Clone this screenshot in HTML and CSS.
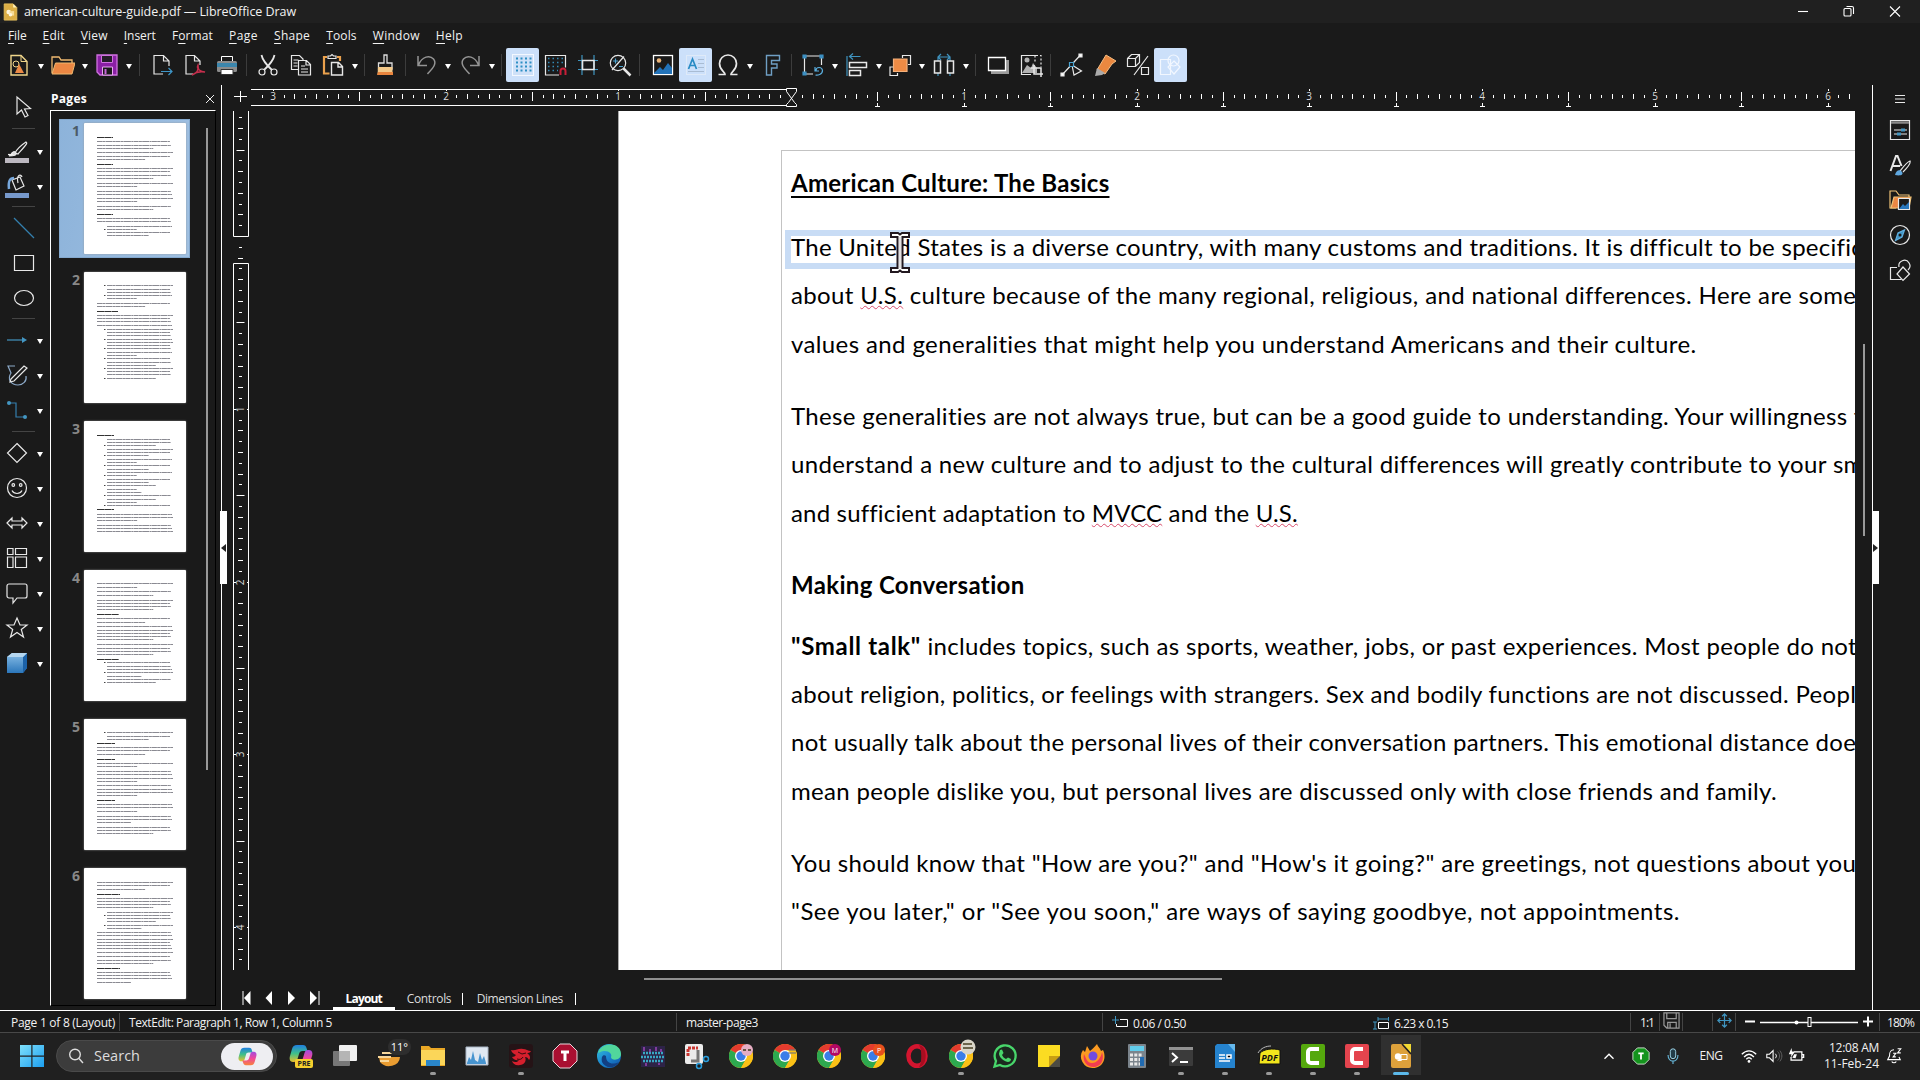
FILE: index.html
```html
<!DOCTYPE html>
<html lang="en">
<head>
<meta charset="utf-8">
<title>american-culture-guide.pdf — LibreOffice Draw</title>
<link rel="stylesheet" href="styles.css">
</head>
<body>
<div class="app">
<header class="titlebar">
  <svg class="appicon" viewBox="0 0 16 20"><path d="M1 1h10l4 4v14H1z" fill="#dcae45" stroke="#e9c15b"/><path d="M11 1l4 4h-4z" fill="#fff3c0"/><circle cx="6" cy="10" r="2.6" fill="#fff6dc"/><path d="M7 9h5v5H7z" fill="#f6dc97"/><circle cx="8" cy="13" r="2" fill="#fff6dc"/></svg>
  <span class="title"><span data-w="272">american-culture-guide.pdf — LibreOffice Draw</span></span>
  <svg class="winbtn" viewBox="0 0 46 22"><path d="M18 10.5h10"/></svg>
  <svg class="winbtn" viewBox="0 0 46 22"><rect x="18" y="7.5" width="7" height="7.5" rx="1"/><path d="M20.500 5.500h5.500a1.500 1.500 0 0 1 1.500 1.500v6"/></svg>
  <svg class="winbtn" viewBox="0 0 46 22"><path d="M18 5.500l10 10M28 5.500l-10 10"/></svg>
</header>
<nav class="menubar">
  <span data-w="18.5"><u>F</u>ile</span><span data-w="22"><u>E</u>dit</span><span data-w="27"><u>V</u>iew</span><span data-w="32"><u>I</u>nsert</span><span data-w="41">F<u>o</u>rmat</span><span data-w="29"><u>P</u>age</span><span data-w="36"><u>S</u>hape</span><span data-w="30.500"><u>T</u>ools</span><span data-w="47"><u>W</u>indow</span><span data-w="27"><u>H</u>elp</span>
</nav>
<div class="toolbar">
  <i class="b"><svg viewBox="0 0 24 24"><path d="M4 2.500h10l6 6v13.500H4z" fill="none" stroke="#efd58a" stroke-width="1.400"/><path d="M14 2.500v6h6" fill="none" stroke="#efd58a"/><circle cx="9" cy="11" r="3" fill="none" stroke="#efd58a"/><path d="M12 11l5 9H8z" fill="#ec8a45"/></svg></i><i class="c"></i>
  <i class="b"><svg viewBox="0 0 24 24"><path d="M1 20V4h7l2 3h11v3" fill="none" stroke="#efb970" stroke-width="1.300"/><path d="M4.500 10H24l-3 11H1z" fill="#ec8743" stroke="#efb970"/></svg></i><i class="c"></i>
  <i class="b"><svg viewBox="0 0 24 24"><path d="M2 2h20v20H5l-3-3z" fill="#8b1fa5" stroke="#cf72df" stroke-width="1.300"/><path d="M6.500 2.500h11v7h-11z" fill="#241c28" stroke="#cf72df"/><path d="M7.500 14h10v8h-10z" fill="#1a1a1a" stroke="#e9a8f2"/><path d="M9.500 16h2v5h-2z" fill="#c765d8"/></svg></i><i class="c"></i>
  <i class="s s3"></i>
  <i class="b"><svg viewBox="0 0 24 24" class="ln"><path d="M19 13V8l-5.500-5.500H4V21h9M13.500 2.500V8H19"/><path d="M11 18.500h11M18.500 15l3.500 3.500-3.500 3.500" stroke="#3e96c8"/></svg></i>
  <i class="b"><svg viewBox="0 0 24 24" class="ln"><path d="M18 12V8l-5.500-5.500H4V21h7M12.500 2.500V8H18"/><path d="M10 22c5-2 7-6 6-10-2 4 3 7 7 7-5-1-9 0-13 3z" stroke="#c52e4c" stroke-width="1.500"/></svg></i>
  <i class="b"><svg viewBox="0 0 24 24"><path d="M6.500 3.500h11V10h-11z" fill="#1a1a1a" stroke="#fff"/><rect x="2" y="8" width="20" height="11" rx="1.500" fill="#8c8c8c"/><rect x="2" y="10" width="20" height="4" fill="#3c86ac"/><path d="M6 16.500h12v5H6z" fill="#fff" stroke="#333"/></svg></i>
  <i class="s"></i>
  <i class="b"><svg viewBox="0 0 24 24" class="ln"><path d="M5.500 2c1 5 4 9 10.500 15M18.500 2c-1 5-4 9-10.500 15" stroke-width="1.800"/><circle cx="6" cy="19" r="3"/><circle cx="18" cy="19" r="3"/></svg></i>
  <i class="b"><svg viewBox="0 0 24 24" class="ln"><path d="M9 16.500H2.500v-14h8L14 6v1M4.500 7h5M4.500 10h4M4.500 13h4M9.500 7.500h8l4 4v10.500h-12zM17 8v4h4M12 13h4M12 16h7M12 19h7"/></svg></i>
  <i class="b"><svg viewBox="0 0 24 24" class="ln"><path d="M8.500 20.500H3V4h3M16 4h3v4" stroke="#eaa14d" stroke-width="2.200"/><path d="M7 5.500V3h2.500L11 1.500 12.500 3H15v2.500z"/><path d="M10.500 9.500h7l4 4v8.500h-11zM17 10v4h4" stroke-width="1.400"/></svg></i><i class="c"></i>
  <i class="s"></i>
  <i class="b"><svg viewBox="0 0 24 24"><path d="M11 2h3v8h5v6H5.500v-6H11z" fill="#1a1a1a" stroke="#ddd" stroke-width="1.300"/><path d="M5 14h14.500v7.500h-15z" fill="#f3c98a"/><path d="M5 19h15v3H4z" fill="#e9853e"/></svg></i>
  <i class="s"></i>
  <i class="b"><svg viewBox="0 0 24 24" class="ln dim"><path d="M3 3v9.500h9M3.500 12C7 3 15 2 18.500 6c4 5-1.500 10-6 15"/></svg></i><i class="c"></i>
  <i class="b"><svg viewBox="0 0 24 24" class="ln dim"><path d="M21 3v9.500h-9M20.500 12C17 3 9 2 5.500 6c-4 5 1.500 10 6 15"/></svg></i><i class="c"></i>
  <i class="s"></i>
  <i class="b on"><svg viewBox="0 0 24 24"><rect x="1.500" y="1.500" width="21" height="21" fill="#cfe1f8" stroke="#f3f8ff"/><path d="M5 5.500h16M5 9.500h16M5 13.500h16M5 17.500h16" stroke="#2e8fc4" stroke-width="2" stroke-dasharray="2 2.500"/></svg></i>
  <i class="b"><svg viewBox="0 0 24 24" class="ln"><path d="M16 22H2.500V2.500h20v12"/><path d="M5 5.500h15M5 9.500h15M5 13.500h11M5 17.500h10" stroke="#3389b5" stroke-width="1.700" stroke-dasharray="1.500 3"/><path d="M17.500 22v-4a2.500 2.500 0 0 1 5 0v4" stroke="#c81f38" stroke-width="2"/></svg></i>
  <i class="b"><svg viewBox="0 0 24 24" class="ln"><path d="M6 2v20M18 2v20M2 7.500h20M2 16.500h20" stroke="#3f95c0"/><path d="M6.500 7.500h11.500v9H6.500z" stroke-width="1.600"/></svg></i>
  <i class="b"><svg viewBox="0 0 24 24" class="ln"><circle cx="10" cy="10" r="7.700"/><path d="M4 17L16 3.500"/><path d="M5 8h5M7.500 5.500v5M11 13.500h4" stroke="#4ba3d0"/><path d="M15.500 15.500l7 7" stroke-width="2.500"/></svg></i>
  <i class="s s2"></i>
  <i class="b"><svg viewBox="0 0 24 24"><rect x="2.500" y="2.500" width="19" height="19" fill="#1a1a1a" stroke="#fff" stroke-width="1.300"/><path d="M3 20l6-6 3 3 5-7 4 5v6H3z" fill="#2373b9"/><circle cx="8" cy="7.500" r="2.300" fill="#ecb478"/></svg></i>
  <i class="b on"><svg viewBox="0 0 24 24"><rect x="2.500" y="2.500" width="19" height="19" fill="none" stroke="#dfeaf8"/><path d="M4.500 16L8.500 6l4 10M6 12.500h5" fill="none" stroke="#298bc4" stroke-width="1.700"/><path d="M14 6.500h6M14 10.500h6M14 14.500h6M4 18.500h16" stroke="#a9bcd3"/></svg></i>
  <i class="b"><svg viewBox="0 0 24 24" class="ln"><path d="M2.500 21.500H9c0-3-5.500-4-5.500-11a8.500 8.500 0 0 1 17 0c0 7-5.500 8-5.500 11h6.500" stroke-width="1.700"/></svg></i><i class="c"></i>
  <i class="b"><svg viewBox="0 0 24 24" class="ln"><path d="M6.500 2.500h13v5h-8v3.500h5.500v4h-5.500v7h-5z" stroke="#6f9fc4" stroke-width="1.400"/></svg></i>
  <i class="s"></i>
  <i class="b"><svg viewBox="0 0 24 24" class="ln"><path d="M12 21H3.500V3h17v9"/><path d="M2 2h3v3H2zM19 2h3v3h-3zM2 19h3v3H2z" fill="#3c8fc2" stroke="#3c8fc2"/><path d="M15 17.500c0-4 6-4 6.500 0 0 4-5 5-7 4.500M14 14v4h4" stroke="#5aaede" /></svg></i><i class="c"></i>
  <i class="b"><svg viewBox="0 0 24 24" class="ln"><path d="M2 3v20M4.500 3.500h11M8 .5l-3.500 3 3.500 3" stroke="#3f93bf"/><path d="M4.500 9.500h17v5h-17zM4.500 17.500h11v5h-11z" stroke-width="1.500"/></svg></i><i class="c"></i>
  <i class="b"><svg viewBox="0 0 24 24" class="ln"><path d="M14.500 5V2.500h8v9H20M9.500 20v2.500H2V14h3"/><path d="M5.500 6h13.500v12.500H5.500z" fill="#ee8b45" stroke="#f3b07b"/></svg></i><i class="c"></i>
  <i class="b"><svg viewBox="0 0 24 24" class="ln"><path d="M6 4h12M9 1L6 4l3 3M15 1l3 3-3 3M6 4v19M18 4v19" stroke="#3f93bf"/><path d="M2.500 8h6v12h-6zM15.500 8h6v12h-6z" fill="#1a1a1a" stroke-width="1.500"/></svg></i><i class="c"></i>
  <i class="s s2"></i>
  <i class="b"><svg viewBox="0 0 24 24"><path d="M5 7h18v14H5z" fill="#9b9b9b"/><path d="M2.500 4.500h17v13h-17z" fill="#1a1a1a" stroke="#fff" stroke-width="1.300"/></svg></i>
  <i class="b"><svg viewBox="0 0 24 24" class="ln"><path d="M17 2.500H2.500v19H12"/><path d="M17 2.500h5V14M16 2.500v8" stroke-dasharray="2 2"/><path d="M3 20l5-8 4 3 2-5 4 5v5H3z" fill="#b2b2b2" stroke="none"/><circle cx="8" cy="7" r="2.500" fill="#b2b2b2" stroke="none"/><path d="M15 12v9h9M11.500 15H22v9" stroke-width="1.500"/></svg></i>
  <i class="s"></i>
  <i class="b"><svg viewBox="0 0 24 24" class="ln"><path d="M2 22L20.500 2M12 12l2 10 7.500-4z"/><path d="M19 1h3v3h-3zM1 20h3v3H1z" fill="#fff"/><path d="M9.500 9.500h4v4h-4z" fill="#1a1a1a" stroke="#4ba3d0"/></svg></i>
  <i class="b w"><svg viewBox="0 0 24 24"><path d="M13 2l10 6-4 3-7 10-8-4 6-10z" fill="#ea8840" stroke="#f4bd82"/><path d="M4 15l8 5-3 2-7 1z" fill="#aaa"/></svg></i>
  <i class="b w"><svg viewBox="0 0 24 24" class="ln"><path d="M1.500 5.500l4-4h8v8l-4 4h-8zM1.500 5.500h8l4-4M9.500 5.500v8M22 3L8 22M15.500 14.500h7v7h-7z"/></svg></i>
  <i class="b on"><svg viewBox="0 0 24 24" class="ln pale"><path d="M2.500 6.500h10v15h-10z"/><circle cx="15.500" cy="7.500" r="5.500"/><path d="M16 8l6 6-6 7-6-7z"/></svg></i>
</div>
<main class="main">
  <aside class="tools">
    <div class="t wide"><svg viewBox="0 0 24 24" class="ln"><path d="M5 2v17l4.500-4 3.500 7 3-1.500-3.500-6.500 6-.5z"/></svg></div>
    <hr class="h6">
    <div class="t"><svg viewBox="0 0 24 24" class="ln"><path d="M10 14c2-4 8-9 11-11 2 1 0 3-8 12z"/><path d="M6 16c1-4 4-4 5-2s-2 3-7 3z" fill="#ddd"/><path d="M3 15.500h5" stroke="#eee"/><path d="M0 19h24v5.500H0z" fill="#bcb8c0" stroke="none"/></svg><b></b></div>
    <div class="t"><svg viewBox="0 0 24 24" class="ln"><path d="M7 6l8-3 4 9-8 4zM13 9c-2-9 3-9 4-6"/><path d="M4 15C3 7 5 4 9 4" stroke="#77a8dc" stroke-width="2.500"/><path d="M0 19h24v5.500H0z" fill="#7799cc" stroke="none"/></svg><b></b></div>
    <hr class="h7">
    <div class="t wide"><svg viewBox="0 0 24 24" class="ln"><path d="M2 2l20 20" stroke="#347fae"/></svg></div>
    <div class="t wide"><svg viewBox="0 0 24 24" class="ln"><path d="M2.500 4.500h19v15h-19z"/></svg></div>
    <div class="t wide"><svg viewBox="0 0 24 24" class="ln"><ellipse cx="12" cy="12" rx="9.500" ry="7.500"/></svg></div>
    <hr class="h7">
    <div class="t"><svg viewBox="0 0 24 24" class="ln"><path d="M2 12h17" stroke="#4396c2"/><path d="M17 9l5 3-5 3z" fill="#4396c2" stroke="none"/></svg><b></b></div>
    <div class="t"><svg viewBox="0 0 24 24" class="ln"><path d="M10 3H3l3 7c-4 6 0 12 7 12 5 0 9-4 8-9" stroke="#8ca9c8"/><path d="M6 16L19 3l3 2L9 18l-4 1z" fill="#1a1a1a"/></svg><b></b></div>
    <div class="t"><svg viewBox="0 0 24 24" class="ln"><path d="M4 5h7v14h9" stroke="#347fae"/><circle cx="4" cy="5" r="2" fill="#4396c2" stroke="none"/><circle cx="20" cy="19" r="2" fill="#4396c2" stroke="none"/></svg><b></b></div>
    <hr class="h8">
    <div class="t"><svg viewBox="0 0 24 24" class="ln"><path d="M12 2.500l9.500 9.500-9.500 9.500L2.500 12z"/></svg><b></b></div>
    <div class="t"><svg viewBox="0 0 24 24" class="ln"><circle cx="12" cy="12" r="9.500"/><circle cx="8.300" cy="9" r="1.300"/><circle cx="15.700" cy="9" r="1.300"/><path d="M7 14.500c2 4 8 4 10 0"/></svg><b></b></div>
    <div class="t"><svg viewBox="0 0 24 24" class="ln"><path d="M2 12l5-5v3h10V7l5 5-5 5v-3H7v3z"/></svg><b></b></div>
    <div class="t"><svg viewBox="0 0 24 24" class="ln"><path d="M2.500 2.500h5.500v6H2.500zM10.500 2.500h11v6h-11zM2.500 11h5.500v10.500H2.500zM10.500 11h11v10.500h-11z"/></svg><b></b></div>
    <div class="t"><svg viewBox="0 0 24 24" class="ln"><path d="M4 3h16a2 2 0 0 1 2 2v10a2 2 0 0 1-2 2h-8l-4 5v-5H4a2 2 0 0 1-2-2V5a2 2 0 0 1 2-2z"/></svg><b></b></div>
    <div class="t"><svg viewBox="0 0 24 24" class="ln"><path d="M12 2l3 7h7l-5.700 4.500L18.500 21 12 16.500 5.500 21l2.200-7.500L2 9h7z"/></svg><b></b></div>
    <div class="t"><svg viewBox="0 0 24 24"><defs><linearGradient id="cu" x2="0" y2="1"><stop stop-color="#8abfe8"/><stop offset="1" stop-color="#2b76ba"/></linearGradient></defs><path d="M2 6l5-4h15v15l-4 5H2z" fill="url(#cu)"/><path d="M18 6l4-4v15l-4 5z" fill="#1c62a8"/><path d="M2 6l5-4h15l-4 4z" fill="#b5d7f0"/></svg><b></b></div>
  </aside>
  <section class="pages">
    <div class="phead"><span data-w="36">Pages</span><svg viewBox="0 0 10 10"><path d="M1 1l8 8M9 1L1 9" stroke="#eee" fill="none"/></svg></div>
    <div class="plist"><div class="thumbs"></div><div class="pscroll"></div></div>
  </section>
  <section class="work">
    <div class="lefthandle"></div>
    <svg class="hruler"></svg>
    <div class="row">
      <svg class="vruler"></svg>
      <div class="canvas">
        <article class="sheet">
          <div class="frame">
            <div class="doc">
              <h1><span data-w="318.500"><u>American Culture: The Basics</u></span></h1>
              <p class="g1"><span data-w="1059">The United States is a diverse country, with many customs and traditions. It is difficult to be specifi</span>c</p>
              <p><span data-w="1065">about <em>U.S.</em> culture because of the many regional, religious, and national differences. Here are some</span></p>
              <p><span data-w="906">values and generalities that might help you understand Americans and their culture.</span></p>
              <p class="g2"><span data-w="1057">These generalities are not always true, but can be a good guide to understanding. Your willingness</span> to</p>
              <p><span data-w="1035">understand a new culture and to adjust to the cultural differences will greatly contribute to your</span> smooth</p>
              <p><span data-w="506">and sufficient adaptation to <em>MVCC</em> and the <em>U.S.</em></span></p>
              <h2 class="g2"><span data-w="234">Making Conversation</span></h2>
              <p class="g3"><span data-w="130"><strong>"Small talk"</strong></span><span data-w="936"> includes topics, such as sports, weather, jobs, or past experiences. Most people do not</span></p>
              <p><span data-w="1066">about religion, politics, or feelings with strangers. Sex and bodily functions are not discussed. Peopl</span>e do</p>
              <p><span data-w="1066">not usually talk about the personal lives of their conversation partners. This emotional distance doe</span>s not</p>
              <p><span data-w="986">mean people dislike you, but personal lives are discussed only with close friends and family.</span></p>
              <p class="g2"><span data-w="1066">You should know that "How are you?" and "How's it going?" are greetings, not questions about you</span>r</p>
              <p><span data-w="889">"See you later," or "See you soon," are ways of saying goodbye, not appointments.</span></p>
            </div>
          </div>
          <div class="editbox"></div>
          <svg class="ibeam" viewBox="0 0 20 41"><path d="M1 1h7l2 1.500L12 1h7v4h-6.500v31H19v4h-7l-2-1.500L8 40H1v-4h6.500V5H1z" fill="#fff" stroke="#221820" stroke-width="2"/><path d="M10 5v31" stroke="#c9c3c8"/></svg>
        </article>
      </div>
      <div class="vscroll"><div></div></div>
    </div>
    <div class="hscroll"><div></div></div>
    <div class="tabs">
      <svg viewBox="0 0 14 14"><path d="M3 0v14" stroke="#fff"/><path d="M10.500 0v14L4 7z" fill="#fff"/></svg>
      <svg viewBox="0 0 14 14"><path d="M10 0v14L3.500 7z" fill="#fff"/></svg>
      <svg viewBox="0 0 14 14"><path d="M4 0v14l7-7z" fill="#fff"/></svg>
      <svg viewBox="0 0 14 14"><path d="M3 0v14l7-7z" fill="#fff"/><path d="M12 0v14" stroke="#fff"/></svg>
      <span class="tab active"><span data-w="36.500">Layout</span></span>
      <span class="tab t2"><span data-w="44.500">Controls</span></span>
      <span class="tab t3"><span data-w="86">Dimension Lines</span></span>
    </div>
  </section>
  <aside class="side">
    <div class="righthandle"></div>
    <svg viewBox="0 0 24 24" class="ln m"><path d="M7 8.500h10M7 12h10M7 15.500h10"/></svg>
    <svg viewBox="0 0 24 24" class="ln"><path d="M2.500 2.500h19v19h-19z"/><path d="M3 4.500h18" stroke="#888" stroke-width="2.500"/><path d="M6 12h13M6 16h13"/><path d="M13 10.500h4v3h-4zM9 14.500h4v3H9z" fill="#4396c2" stroke="none"/></svg>
    <svg viewBox="0 0 24 24" class="ln"><path d="M2.500 18L8 3h1.500l4 10M5 13h7" stroke-width="2"/><path d="M12 18c4-5 7-9 10-10 1 2-4 8-7 11"/><path d="M7 22c1-5 5-6 7-3s-2 4-7 3z" fill="#5fa7df" stroke="none"/></svg>
    <svg viewBox="0 0 24 24" class="ln"><path d="M8 20H2V3h6l3 4h10v2" stroke="#efc276"/><path d="M6 9h17l-2 11H3z" fill="#ec8743" stroke="#efc276"/><path d="M10.500 10.500h11v11h-11z" fill="#1a1a1a"/><path d="M11 21l4-5 2 2 4-4v7z" fill="#2877bd" stroke="none"/></svg>
    <svg viewBox="0 0 24 24" class="ln"><circle cx="12" cy="12" r="9.500"/><path d="M16.500 7l-2.500 7-6.500 3.500L10 10z" fill="#3f94c5" stroke="#62b0df"/><circle cx="12" cy="12" r="1.500" fill="#1a1a1a" stroke="none"/></svg>
    <svg viewBox="0 0 24 24" class="ln"><path d="M9 9.500H2.500v12h11"/><path d="M11 9a5.500 5.500 0 1 1 9 3"/><path d="M15 9l6.500 7-6.500 6.500L9 16z"/></svg>
  </aside>
</main>
<footer class="status">
  <span class="p1"><span data-w="104">Page 1 of 8 (Layout)</span></span><span><span data-w="203">TextEdit: Paragraph 1, Row 1, Column 5</span></span><span><span data-w="72">master-page3</span></span>
  <span class="coord"><svg viewBox="0 0 16 14"><path d="M8 3.500h7.500v7h-11V8" stroke="#fff" fill="none"/><path d="M0 4h7M3.500 0v8" stroke="#3f95c0"/></svg><span data-w="53">0.06 / 0.50</span></span>
  <span class="coord nb"><svg viewBox="0 0 16 14"><path d="M5.500 6.500h10v6h-10z" stroke="#fff" fill="none"/><path d="M5 3h11M5 1v4M15.500 1v4M2 6v7M0 6h4M0 13h4" stroke="#3f95c0"/></svg><span data-w="54">6.23 x 0.15</span></span>
  <span><span data-w="14">1:1</span></span>
  <span class="ic"><svg viewBox="0 0 18 18"><path d="M1 1h16v16H4l-3-3zM4 1v6h10V1M5 17v-6h9v6M7.500 12v5" fill="none" stroke="#999" stroke-width="1.300"/></svg></span><span></span>
  <span class="ic"><svg viewBox="0 0 18 18"><path d="M9 2v14M2 9h14M6.500 4.500L9 2l2.500 2.500M6.500 13.500L9 16l2.500-2.500M4.500 6.500L2 9l2.500 2.500M13.500 6.500L16 9l-2.500 2.500" fill="none" stroke="#3f95c0" stroke-width="1.300"/></svg></span>
  <span class="zoom"><svg viewBox="0 0 143 20"><path d="M9 9.500h10M127 9.500h10M132 4.500v10" stroke="#fff" stroke-width="2"/><path d="M24 10.500h98" stroke="#fff" stroke-width="1.400"/><circle cx="60.500" cy="10.500" r="2" fill="#fff"/><rect x="72" y="5.500" width="3" height="9" fill="#1a1a1a" stroke="#fff"/></svg></span>
  <span><span data-w="27">180%</span></span>
</footer>
<footer class="taskbar">
  <svg class="start" viewBox="0 0 24 24"><defs><linearGradient id="wn" x2="1" y2="1"><stop stop-color="#7fe0fb"/><stop offset="1" stop-color="#1c9ff0"/></linearGradient><linearGradient id="cp" x2="0" y2="1"><stop stop-color="#1f7fe0"/><stop offset=".5" stop-color="#3fc08a"/><stop offset="1" stop-color="#e8c22c"/></linearGradient><linearGradient id="cq" x2="0" y2="1"><stop stop-color="#a24be0"/><stop offset=".5" stop-color="#f0489a"/><stop offset="1" stop-color="#f7833c"/></linearGradient><linearGradient id="ed" x2="1" y2="1"><stop stop-color="#35c5d8"/><stop offset=".5" stop-color="#1b86d2"/><stop offset="1" stop-color="#0e53a5"/></linearGradient>
  <symbol id="copilot" viewBox="0 0 24 24"><path d="M8 1h6c2 0 3 1 3.500 3l1 3h-5c-2 0-3 1-3.500 3l-1.500 5c-.5 2-1.500 3-3.500 3H4c-3 0-4-3-3-6l2-7c1-3 2-4 5-4z" fill="url(#cp)"/><path d="M16 23h-6c-2 0-3-1-3.500-3l-1-3h5c2 0 3-1 3.500-3L15.500 9c.5-2 1.500-3 3.500-3h1c3 0 4 3 3 6l-2 7c-1 3-2 4-5 4z" fill="url(#cq)"/></symbol>
  <symbol id="chrome" viewBox="0 0 24 24"><circle cx="12" cy="12" r="12" fill="#fbc116"/><path d="M12 12L1.600 6A12 12 0 0 1 22.400 6z" fill="#e33b2e"/><path d="M12 12L1.600 6A12 12 0 0 0 12 24l5-9z" fill="#2da94f"/><path d="M12 6h10.400A12 12 0 0 1 12 24l5.200-9z" fill="#fbc116"/><circle cx="12" cy="12" r="6" fill="#fff"/><circle cx="12" cy="12" r="4.700" fill="#3a7de8"/></symbol></defs>
  <path d="M0 1h11.300v10.500H0zM12.500 1H24v10.500H12.500zM0 12.700h11.300V23H0zM12.500 12.700H24V23H12.500z" fill="url(#wn)"/></svg>
  <div class="search"><svg viewBox="0 0 16 16"><circle cx="7" cy="6.500" r="5.300" fill="none" stroke="#ddd" stroke-width="1.400"/><path d="M11 10.500l4 4.500" stroke="#ddd" stroke-width="1.400"/></svg><span data-w="46">Search</span><div class="pill"><svg viewBox="0 0 24 24"><use href="#copilot"/></svg></div></div>
  <div class="apps">
    <i><svg viewBox="0 0 24 24"><use href="#copilot"/><rect x="6" y="15" width="18" height="9" rx="2" fill="#f6cf2d"/><text x="15" y="22.300" class="pre">PRE</text></svg></i>
    <i><svg viewBox="0 0 24 24"><rect x="6" y="1" width="18" height="16" rx="1" fill="#f1f1f1"/><rect x="0" y="7" width="17" height="15" rx="1" fill="#777"/><rect x="6" y="7" width="11" height="10" fill="#b5b5b5"/></svg></i>
    <i><svg viewBox="0 0 24 24"><path d="M2 13h21a11 9.500 0 0 1-20 5z" fill="#e99c31"/><path d="M5 9h11M1 13h13M3 17h9" stroke="#f8d79a" stroke-width="2"/></svg><small>11°</small></i>
    <i class="run"><svg viewBox="0 0 24 24"><path d="M0 2h8l2 2h14v18H0z" fill="#eaa825"/><path d="M0 6h24v15H0z" fill="#fbd659"/><path d="M5 16h14v6H5z" fill="#2a86c9"/></svg></i>
    <i><svg viewBox="0 0 24 24"><path d="M1 3h22v18H1z" fill="#dfe8f2" stroke="#a9b5c4"/><path d="M2 19l2-6 2 3 2-9 2 9 3 2 2-9 2 7 2-4 2 7v1H2z" fill="#4794cf"/></svg></i>
    <i class="run"><svg viewBox="0 0 24 24"><rect width="24" height="24" rx="3" fill="#251316"/><path d="M2 6c5 1 7-2 12-1 3 0 5 2 8 2-1 2-3 2-4 2 3 2 4 5 2 7-1-2-2-3-4-3 2 4-1 8-5 8-4 1-7-1-8-4 3 2 6 1 7-1-3 1-6-1-7-3 2 0 3-1 4-2-2-1-4-2-5-5z" fill="#d51f2d"/><path d="M9 8l4 2 4-1M8 15c3 1 5 0 6-2" stroke="#39090d" fill="none"/></svg></i>
    <i><svg viewBox="0 0 24 24"><path d="M7 0h10l7 7v10l-7 7H7l-7-7V7z" fill="#a90f31" stroke="#ead8dc"/><path d="M8 8h8M12 8v9" stroke="#fff" stroke-width="3"/></svg></i>
    <i><svg viewBox="0 0 24 24"><circle cx="12" cy="12" r="12" fill="url(#ed)"/><path d="M1 9C5-3 24-2 24 10c0 7-10 7-10 3 2-4-5-9-13-4z" fill="#51d69c"/><path d="M9 12c0 8 7 9 13 6-5 8-14 6-17 0-1-5 1-8 4-6z" fill="#123f82"/></svg></i>
    <i><svg viewBox="0 0 24 24"><rect y="2" width="24" height="21" fill="#2d2347"/><path d="M2 9h20M0 13h24M2 17h20" stroke="#38a8c4" stroke-width="2.500" stroke-dasharray="2 1"/><path d="M3 3v4M9 5v3M15 3v4M20 5v3M5 19v3M18 19v2" stroke="#9b45b8" stroke-width="1.500"/></svg></i>
    <i><svg viewBox="0 0 24 24"><rect width="18" height="20" rx="2" fill="#ececec"/><path d="M3 12V4h10" fill="none" stroke="#c93530" stroke-width="3" stroke-dasharray="3 1"/><path d="M13 6v11H6" fill="none" stroke="#777" stroke-width="3"/><circle cx="21" cy="15" r="2.500" fill="none" stroke="#2a9ddb" stroke-width="1.500"/><circle cx="14" cy="22" r="2.500" fill="none" stroke="#2a9ddb" stroke-width="1.500"/></svg></i>
    <i><svg viewBox="0 0 24 24"><use href="#chrome"/><circle cx="18" cy="6" r="6" fill="#e5adc3"/><path d="M14 6h3M19 6h3" stroke="#654" stroke-width="2"/></svg></i>
    <i><svg viewBox="0 0 24 24"><use href="#chrome"/><path d="M16 6h7M15 9h8" stroke="#777" stroke-width="2" opacity=".6"/></svg></i>
    <i><svg viewBox="0 0 24 24"><use href="#chrome"/><circle cx="18" cy="6" r="6" fill="#b30764"/><text x="18" y="8.600" class="av">M</text></svg></i>
    <i><svg viewBox="0 0 24 24"><use href="#chrome"/><circle cx="18" cy="6" r="6" fill="#e8501c"/><text x="18" y="8.600" class="av">P</text></svg></i>
    <i><svg viewBox="0 0 24 24"><ellipse cx="12" cy="12" rx="8.500" ry="9.800" fill="none" stroke="#d3152f" stroke-width="4.500"/><path d="M14 1c9 1 9 21 0 22 3-4 3-18 0-22z" fill="#a70d20"/></svg></i>
    <i class="run"><svg viewBox="0 0 24 24"><use href="#chrome"/><circle cx="19" cy="3" r="7.500" fill="#d9d5c8"/><path d="M14 0h9M14 4h10" stroke="#6d654c" stroke-width="2.200"/></svg></i>
    <i><svg viewBox="0 0 24 24"><path d="M1.500 22.500L3 17a10.500 10.500 0 1 1 4 4z" fill="#1b2a1f" stroke="#48d66b" stroke-width="2.300"/><path d="M7 6l2-.5 1.500 3.500-1.500 2c1 2 2 3 4 4l2-1.500 3 1.500c0 3-3 3.500-5 2.500-4-1.500-7-5-7-8z" fill="#48d66b"/></svg></i>
    <i><svg viewBox="0 0 24 24"><path d="M1 1h22v22H1z" fill="#fbdc22"/><path d="M12 23V12h11v11z" fill="#4c4b43"/><path d="M12 23V12h11z" fill="#c79e12"/></svg></i>
    <i><svg viewBox="0 0 24 24"><path d="M12 24A11.500 11.500 0 0 1 2 6l2 2 2-6 3 5c3-2 5-5 7-7 1 3 3 4 4 7l2-1c4 8 0 18-10 18z" fill="#fb9a22"/><path d="M3 10c-2 8 4 14 11 13 8-2 9-9 7-15-1 6-5 11-10 11-5 0-6-5-8-9z" fill="#f13c50"/><circle cx="12" cy="12" r="4.500" fill="#714be0"/></svg></i>
    <i><svg viewBox="0 0 24 24"><rect x="3" width="18" height="24" rx="1" fill="#7b848c"/><path d="M5 2h14v5H5z" fill="#61cdec"/><path d="M5 11h12M5 15.500h12M5 20h12" stroke="#e8e8e8" stroke-width="3" stroke-dasharray="3 1.300"/><path d="M15 13h4v9h-4z" fill="#216bb2"/></svg></i>
    <i class="run"><svg viewBox="0 0 24 24"><rect y="3" width="24" height="19" rx="1" fill="#3b3b3b"/><path d="M0 3h24v3H0z" fill="#929292"/><path d="M3 9l5 4.500L3 18M11 18h8" fill="none" stroke="#fff" stroke-width="2"/></svg></i>
    <i class="run"><svg viewBox="0 0 24 24"><path d="M4 0h12l6 7v17H2V2z" fill="#2583ce"/><path d="M15 0h7v8z" fill="#66b9ed"/><path d="M6 11h6M6 14h6M6 17h11M14 11h4v3h-4z" stroke="#fff" stroke-width="1.500"/></svg></i>
    <i class="run"><svg viewBox="0 0 24 24"><path d="M3 9c4-4 13-5 20-3v14H2z" fill="#f3e61d" stroke="#111"/><path d="M1 9c3-5 8-7 13-7" stroke="#bbb" fill="none"/><text x="12.500" y="16.500" class="pdf">PDF</text></svg></i>
    <i class="run"><svg viewBox="0 0 24 24"><rect width="24" height="24" rx="2" fill="#55a80d"/><path d="M18 5H10a3 3 0 0 0-3 3v8a3 3 0 0 0 3 3h8" fill="none" stroke="#fff" stroke-width="4"/></svg></i>
    <i class="run"><svg viewBox="0 0 24 24"><rect width="24" height="24" rx="2" fill="#e4444e"/><path d="M18 5H10a3 3 0 0 0-3 3v8a3 3 0 0 0 3 3h8" fill="none" stroke="#fff" stroke-width="4"/></svg></i>
    <i class="run cur"><svg viewBox="0 0 24 24"><path d="M4 0h12l6 7v15a2 2 0 0 1-2 2H4a2 2 0 0 1-2-2V2a2 2 0 0 1 2-2z" fill="#dda13b"/><path d="M14 0h8v9z" fill="#f2d933"/><path d="M13 0l9 10" stroke="#222" stroke-width="1.600"/><circle cx="9" cy="12.500" r="3.200" fill="#fff"/><path d="M12 10.500h6v5h-6z" fill="none" stroke="#fff"/><path d="M8 17l3-3 2 3z" fill="#fff"/></svg></i>
  </div>
  <div class="tray">
    <svg viewBox="0 0 20 20"><path d="M5 13l5-5 5 5" fill="none" stroke="#fff" stroke-width="1.500"/></svg>
    <svg viewBox="0 0 20 20"><path d="M6 1h8l5 5v8l-5 5H6l-5-5V6z" fill="#14941d" stroke="#d7ead8"/><path d="M7 7h6M10 7v7" stroke="#fff" stroke-width="2"/></svg>
    <svg viewBox="0 0 20 20"><rect x="7" y="2" width="6" height="11" rx="3" fill="#223c48" stroke="#a5dcf0"/><path d="M4.500 9c0 9 11 9 11 0M10 16v3" fill="none" stroke="#66b4d6" stroke-width="1.300"/></svg>
    <span class="eng"><span data-w="23">ENG</span></span>
    <svg viewBox="0 0 20 20"><path d="M2 8c5-5 11-5 16 0M4.500 11c4-4 7-4 11 0M7 13.500c2-2 4-2 6 0" fill="none" stroke="#fff" stroke-width="1.500"/><circle cx="10" cy="16" r="1.500" fill="#fff"/></svg>
    <svg viewBox="0 0 20 20"><path d="M2 8h3l4-4v12l-4-4H2z" fill="none" stroke="#fff" stroke-width="1.200"/><path d="M11.500 7.500c1.500 2 1.500 3 0 5" fill="none" stroke="#fff"/><path d="M14 5c3 3 3 7 0 10M16.500 4c3 4 3 8 0 12" fill="none" stroke="#666"/></svg>
    <svg viewBox="0 0 20 20"><path d="M8 5.500h8.500v9h-12V11M16.500 8.500h2v3h-2" fill="none" stroke="#fff" stroke-width="1.400"/><path d="M6 12l2-4h3l-1.500 4.500z" fill="#fff"/><path d="M5 1L2 8h3l-1 4 5-7H5.500z" fill="#fff"/></svg>
    <div class="clock"><span data-w="50">12:08 AM</span><span data-w="55">11-Feb-24</span></div>
    <svg viewBox="0 0 20 20"><path d="M10 3c-5 0-5 4-5 7l-2 4h14l-1.500-3M7.500 16c1 2 4 2 5 0M9 7h3l-3 4h3M14 2h3.500L14 6.500h3.500" fill="none" stroke="#fff" stroke-width="1.200"/></svg>
  </div>
</footer>
</div>
<script src="main.js"></script>
</body>
</html>
```
FILE: styles.css
```css
* { box-sizing: border-box; }
body { margin: 0; background: #1a1a1a; }
.app { width: 1920px; height: 1080px; overflow: hidden; display: flex; flex-direction: column; background: #1a1a1a; color: #f2f2f2; font: 12px/16px "Open Sans", "Noto Sans", sans-serif; white-space: nowrap; }
i { font-style: normal; }
svg { display: block; flex: none; }
[data-w] { display: inline-block; white-space: pre; }
.ln { fill: none; stroke: #e8e8e8; stroke-width: 1.2; }
.dim { stroke: #949494; stroke-width: 1.5; }
.pale { stroke: #f2f7ff; }

.titlebar { height: 23px; flex: none; background: #202020; display: flex; align-items: center; padding-right: 2px; }
.appicon { width: 15px; height: 18px; margin: 0 6px 0 3px; }
.title { flex: 1; font-size: 12.5px; }
.winbtn { width: 46px; height: 22px; fill: none; stroke: #fff; stroke-width: 1.1; }

.menubar { height: 25px; flex: none; display: flex; align-items: center; gap: 16.1px; padding: 0 0 0 8px; }
.menubar u { text-underline-offset: 3px; text-decoration-thickness: 1px; }

.toolbar { height: 34px; flex: none; display: flex; align-items: center; padding-left: 3px; }
.b { width: 32.5px; height: 34px; flex: none; display: flex; align-items: center; justify-content: center; border-radius: 2px; }
.b.w { width: 33px; }
.b svg { width: 24px; height: 24px; }
.b.on { background: #cce0fa; }
.c { width: 11.3px; height: 34px; flex: none; display: flex; align-items: center; justify-content: center; }
.c::after, .t b::after { content: ""; border: 3.5px solid transparent; border-top: 5px solid #fff; border-bottom: 0; margin-top: 3px; }
.s { width: 8.6px; flex: none; height: 22px; background: linear-gradient(#3c3c3c, #3c3c3c) 3px 0 / 1px 100% no-repeat; }
.s.s2 { width: 10.3px; }
.s.s3 { width: 11.3px; background-position-x: 5px; }

.main { height: 928px; flex: none; display: flex; }
.tools { width: 50px; flex: none; padding-top: 7px; }
.tools .t { height: 35px; display: flex; align-items: center; padding-left: 5px; }
.tools .t.wide { padding-left: 12px; }
.tools .t svg { width: 24px; height: 24px; }
.tools .t b { width: 22px; display: flex; justify-content: center; }
.tools hr { border: 0; margin: 0 0 0 12px; width: 23px; background: linear-gradient(#444, #444) 0 50% / 100% 1px no-repeat; }
.tools .h6 { height: 9px; }
.tools .h7 { height: 7px; }
.tools .h8 { height: 8px; }

.pages { width: 171px; flex: none; }
.phead { height: 28px; padding: 6px 6px 0 1px; display: flex; align-items: center; justify-content: space-between; font-weight: 700; color: #fff; }
.phead svg { width: 10px; height: 10px; }
.plist { width: 166px; height: 896px; border: 1px solid #fff; border-right-color: #000; border-bottom-color: #000; display: flex; padding: 8px 0 0 8px; }
.thumbs { width: 131px; }
.item { height: 139px; margin-bottom: 10px; display: flex; gap: 3px; padding: 4px 0 0 13px; font: 700 14px/16px "Open Sans", sans-serif; color: #888; }
.item span { width: 9px; }
.item.sel { background: linear-gradient(100deg, #8db3da, #9fc0e2); border: 1px solid #84a8cd; padding: 3px 0 0 12px; color: #4c5b66; }
.item svg { width: 102px; height: 131px; background: #fff; border-radius: 1px; box-shadow: 0 0 2px #999; }
.pscroll { width: 2px; height: 642px; margin: 9px 0 0 16px; background: #999; }

.work { width: 1651px; flex: none; border-left: 1px solid #fff; position: relative; margin-top: 3px; display: flex; flex-direction: column; }
.lefthandle { position: absolute; left: -2px; top: 426px; width: 7px; height: 73px; background: #fff; display: flex; align-items: center; }
.lefthandle::after { content: ""; border: 4px solid transparent; border-right: 5px solid #222; border-left: 0; margin-left: 1px; }
.hruler { width: 1640px; height: 26px; }
.row { height: 859px; display: flex; }
.vruler { width: 29px; height: 859px; }
.rt { font: 10px "Open Sans", sans-serif; fill: #ddd; text-anchor: middle; }
.canvas { width: 1604px; height: 859px; overflow: hidden; padding-left: 367px; }
.sheet { height: 859px; background: #fff; position: relative; padding: 39px 0 0 162px; border-left: 1px solid #aaa; }
.frame { height: 820px; border: 1px solid #c3c3c3; border-width: 1px 0 0 1px; padding: 8px 0 0 9px; overflow: hidden; }
.doc { color: #000; font: 24px/48.4px Lato, "Open Sans", sans-serif; position: relative; z-index: 1; }
.doc h1, .doc h2, .doc p { margin: 0; font-size: 24px; height: 48.4px; }
.doc .g1 { margin-top: 15.5px; }
.doc .g2 { margin-top: 23.7px; }
.doc .g3 { margin-top: 12.6px; }
.doc u { text-decoration-thickness: 2px; text-underline-offset: 4px; text-decoration-skip-ink: none; }
.doc em { font-style: normal; text-decoration: underline wavy #d64a6a 1px; text-underline-offset: 1px; text-decoration-skip-ink: none; }
.editbox { position: absolute; left: 166px; top: 119px; width: 1090px; height: 39px; border: 6px solid #c8dcf5; }
.ibeam { position: absolute; left: 271px; top: 121px; width: 20px; height: 41px; z-index: 2; }
.vscroll { padding: 233px 0 0 8px; }
.vscroll div { width: 2px; height: 192px; background: #999; }
.hscroll { height: 16px; padding: 8px 0 0 422px; }
.hscroll div { width: 578px; height: 2px; background: #8f8f8f; }
.tabs { flex: 1; display: flex; align-items: stretch; padding-left: 18px; }
.tabs > svg { width: 14px; height: 14px; margin: 5px 8.2px 0 0; }
.tab { padding-top: 5px; color: #ddd; }
.tab.active { width: 62px; margin-left: 4px; text-align: center; color: #fff; font-weight: 700; border-bottom: 3px solid #fff; }
.tab.t2 { padding-left: 12px; width: 68px; }
.tab.t3 { padding-left: 14px; width: 113px; }
.t2, .t3 { background: linear-gradient(#fff, #fff) 100% 7px / 1px 12px no-repeat; }

.side { width: 48px; flex: none; border-left: 1px solid #fff; position: relative; margin-top: 3px; padding-left: 15px; display: flex; flex-direction: column; gap: 11px; padding-top: 33px; }
.side svg { width: 24px; height: 24px; }
.side .m { margin-top: -31px; margin-bottom: -4px; }
.righthandle { position: absolute; left: 0; top: 426px; width: 6px; height: 73px; background: #fff; display: flex; align-items: center; }
.righthandle::after { content: ""; border: 4px solid transparent; border-left: 5px solid #222; border-right: 0; }

.status { height: 23px; flex: none; border-top: 1px solid #fff; border-bottom: 1px solid #484848; display: grid; grid-template-columns: 120px 557px 426px 261px 267px 29px 23px 30px 23px 144px 40px; }
.status > span { padding: 4px 0 0 9px; background: linear-gradient(#444, #444) 100% 2px / 1px 18px no-repeat; }
.status > .p1 { padding-left: 11px; }
.status > span:last-child, .status > .coord:nth-child(4) { background: none; }
.status > .coord { display: flex; gap: 5px; padding-top: 5px; }
.coord svg { width: 16px; height: 14px; }
.status > .ic { padding: 1px 0 0 3px; }
.ic svg { width: 17px; height: 17px; }
.status > .zoom { padding: 1px 0 0; }
.zoom svg { width: 143px; height: 20px; }
.status > span:last-child { padding-left: 7px; }

.taskbar { height: 47px; flex: none; background: #202020; display: flex; align-items: center; padding-bottom: 1px; }
.start { width: 24px; height: 24px; margin: 0 12px 0 20px; }
.search { width: 221px; height: 32px; border-radius: 16px; background: #3c3c3c; border: 1px solid #4a4a4a; display: flex; align-items: center; padding: 0 3px 0 11px; font-size: 14.5px; color: #ddd; }
.search > svg { width: 16px; height: 16px; margin-right: 10px; }
.pill { width: 52px; height: 27px; border-radius: 14px; background: #eeeef2; margin-left: auto; display: flex; align-items: center; justify-content: center; }
.pill svg { width: 19px; height: 19px; }
.apps { display: flex; margin-left: 2px; }
.apps i { width: 44px; height: 42px; display: flex; flex-direction: column; align-items: center; padding-top: 9px; position: relative; }
.apps svg { width: 24px; height: 24px; overflow: visible; }
.apps small { position: absolute; right: 0; top: 4px; font-size: 11px; padding: 0 3px; border-radius: 8px; background: #2e2e2e; color: #fff; }
.apps .run::after { content: ""; width: 6px; height: 3px; border-radius: 2px; background: #999; margin-top: 4px; }
.apps .cur { background: linear-gradient(#303030, #303030) 2px 0 / 40px 40px no-repeat; }
.apps .cur::after { width: 16px; background: #5cb9ea; }
.pre { font: 700 7px "Open Sans", sans-serif; text-anchor: middle; fill: #222; }
.av { font: 7px "Open Sans", sans-serif; text-anchor: middle; fill: #fff; }
.pdf { font: italic 700 9px "Open Sans", sans-serif; text-anchor: middle; fill: #111; }
.tray { margin-left: auto; display: grid; grid-template-columns: 32px 32px 32px 44px 32px 18px 26px 70px 30px; align-items: center; justify-items: center; padding-right: 11px; }
.tray svg { width: 18px; height: 18px; }
.clock { display: flex; flex-direction: column; align-items: flex-end; justify-self: end; line-height: 16px; }
```
FILE: main.js
```js
const NS = 'http://www.w3.org/2000/svg';
function add(svg, tag, attrs, text) {
  const el = document.createElementNS(NS, tag);
  for (const k in attrs) el.setAttribute(k, attrs[k]);
  if (text) el.textContent = text;
  svg.appendChild(el);
}
const INCH = 172.75;

// Horizontal ruler, zero mark at x = 569 of the ruler strip
const h = document.querySelector('.hruler');
const X0 = 569;
let d = '';
for (let n = -50; n < 100; n++) {
  const x = Math.round(X0 + n * INCH / 16) + .5;
  if (x < 30 || x > 1632 || n === 0) continue;
  if (n % 16 === 0) {
    add(h, 'text', { x: x - .5, y: 15, class: 'rt' }, String(Math.abs(n / 16)));
    d += `M${x} 4v2`;
  } else {
    const len = n % 8 === 0 ? 9 : n % 2 === 0 ? 5 : 3;
    d += `M${x} ${11.5 - len / 2}v${len}`;
  }
  if (n > 0 && n % 8 === 0) d += `M${x} 18v3M${x - 2.5} 21.500h5`;
}
d += `M29 4.500h${X0 - 29}M29 20.500h${X0 - 29}M18.500 6v11M12 11.500h13`;
add(h, 'path', { d: d, stroke: '#fff', fill: 'none' });
add(h, 'path', { d: `M${X0 - 4.5} 3.500h10v3l-8 11-2 2v2h10v-2l-2-2-8-11z`, stroke: '#fff', fill: '#1a1a1a' });

// Vertical ruler, zero mark at y = 125 of the strip
const v = document.querySelector('.vruler');
let e = 'M11.500 0v125.500h15V0M11.500 859V152.500h15V859';
for (let n = -11; n < 69; n++) {
  const y = Math.round(125 + n * INCH / 16) + .5;
  if (n === 0) continue;
  if (n % 16 === 0) {
    add(v, 'text', { transform: `translate(22 ${y}) rotate(-90)`, class: 'rt' }, String(n / 16));
    e += `M12 ${y}h2M25 ${y}h2`;
  } else {
    const len = n % 8 === 0 ? 8 : n % 2 === 0 ? 5 : 3;
    e += `M${18.5 - len / 2} ${y}h${len}`;
  }
}
add(v, 'path', { d: e, stroke: '#fff', fill: 'none' });

// Page previews: y positions of text rows in thirds of a pixel.
// "h" = heading, "i" = indented row, "s" = short last row
const pages = [
  'h41 55 65 74s 88 98 107s h122 134 145 155 164s 179 188s 203 212 224 233s 248 257s h272 284 293 i308 i317s i326 i335s',
  'i40 i51 i61 i70 i79s 94 103s h118 130 139 148 160 i172 i181 i190 i202 i211 i220 i229 i241 i250s i259 i271 i280s i289 i298 i307 i319s',
  'h43 i55 i64 i73s i85 i94 i103s i115 i124s i133 i145s i154 i163s i175 i184s i193s i205s i214s i223 i235s i244s i253 h265 280 289 298s 313 322 331',
  '40 52s 64 76s 91 100 109 118s h133 145 157s 169 181 190 199 208s 223 235 244 253s h268 i277 i289 i298 i307 i319s i328 i337s',
  'i40 i52 i61s h73 85 94 106s h121 133 142s 157 166 176 187s 199 211 220 229s h244 256 265 277s 292 301 310s 325 334 343s',
  '43 52 64s h79 91 100 109 118s i133 i142 i151 i160s i172 i181s 193 202 214 223 232 241 253 265 277 286s h301 313 322 331 343s'
];
const list = document.querySelector('.thumbs');
pages.forEach((rows, i) => {
  const item = document.createElement('div');
  item.className = i ? 'item' : 'item sel';
  item.innerHTML = `<span>${i + 1}</span>`;
  const svg = document.createElementNS(NS, 'svg');
  svg.setAttribute('viewBox', '0 0 102 131');
  rows.split(' ').forEach((r, k) => {
    const y = Math.round(parseInt(r.replace(/\D/g, ''), 10) / 3) + .5;
    const head = r[0] === 'h';
    const x = r[0] === 'i' ? 23 : 13;
    const full = 89 - (k * 7 % 4) - x;
    const w = head ? 16 + (i * 5 % 9) : r.endsWith('s') ? full * (.45 + (k % 4) * .1) : full;
    if (r[0] === 'i' && k % 3 === 0) add(svg, 'path', { d: `M20 ${y}h1.500`, stroke: '#444' });
    add(svg, 'path', { d: `M${x} ${y}h${w}`, stroke: head ? '#333' : '#8a8a92', 'stroke-width': 1, 'stroke-dasharray': head ? '7 .3' : '5 .3 3 .3 7 .4 2 .3' });
  });
  item.appendChild(svg);
  list.appendChild(item);
});

// Track every label to its set width
document.querySelectorAll('[data-w]').forEach(el => {
  const n = el.textContent.length;
  el.style.letterSpacing = '0px';
  el.style.letterSpacing = (el.dataset.w - el.getBoundingClientRect().width) / n + 'px';
});
```
